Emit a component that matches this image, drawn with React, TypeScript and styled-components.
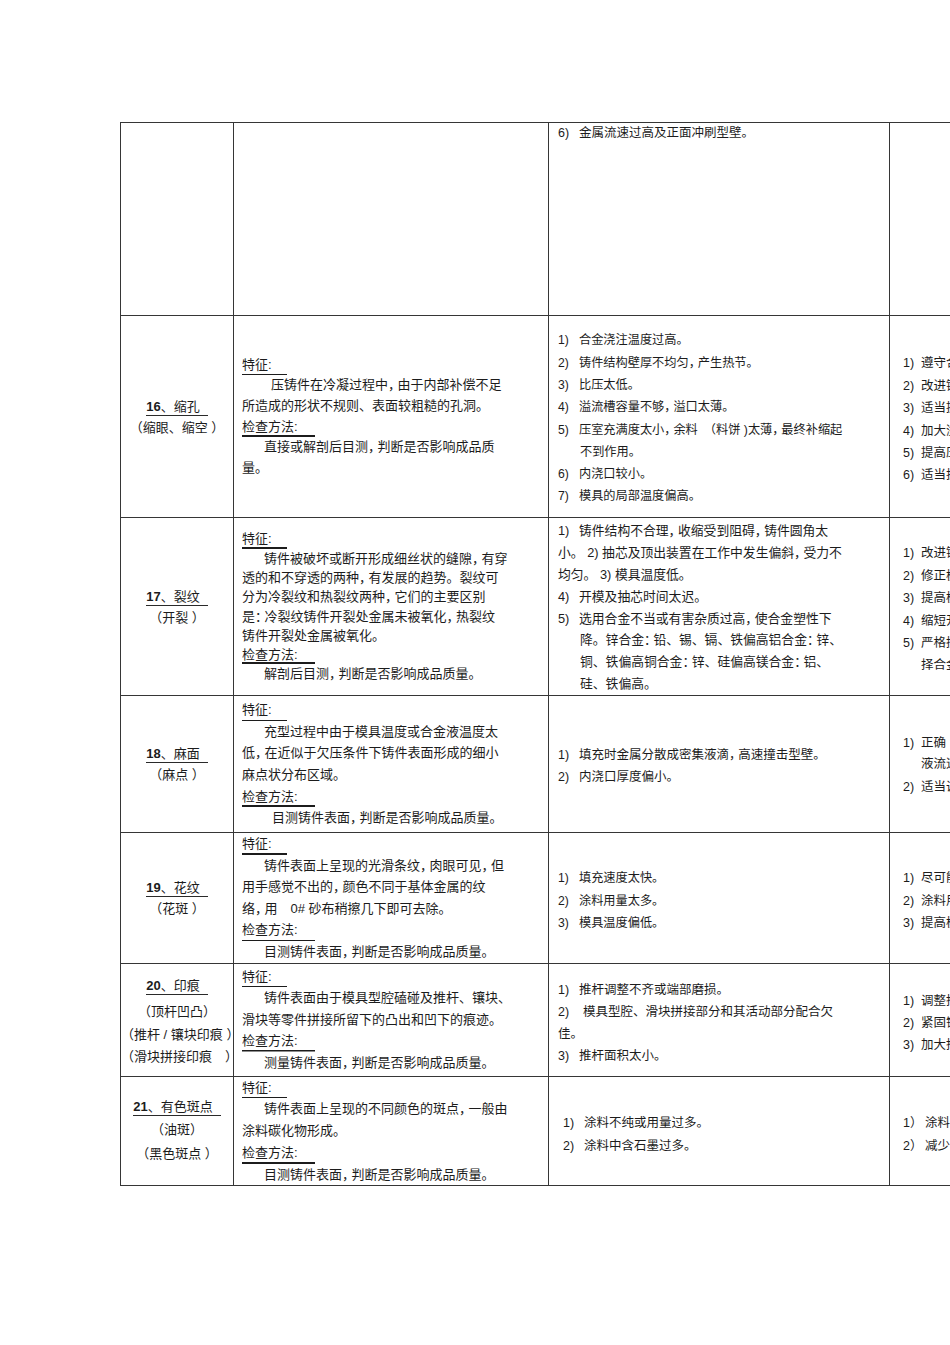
import React from 'react';
import styled, { createGlobalStyle } from 'styled-components';

type Seg = {
  n?: string;
  t: string;
  pad?: number;
  h?: number;
  nw?: number;
};

type TextBlock = {
  fs: number;
  lh: number;
  pl: number;
  pt: number;
  segs: Seg[];
};

type Desc = {
  lh: number;
  feature: string[];
  featIndent: number;
  featThick: number;
  check: string[];
  checkIndent: number;
  checkThick: number;
};

type Label = {
  num: string;
  name: string;
  subs: { t: string; h?: number }[];
  titleH?: number;
};

type RowData = {
  height: number;
  top?: boolean;
  label?: Label;
  desc?: Desc;
  causes: TextBlock;
  fixes: TextBlock;
};

const GlobalStyle = createGlobalStyle`
  html, body {
    margin: 0;
    padding: 0;
    background: #ffffff;
    overflow: hidden;
  }
  body {
    font-family: "Liberation Sans", "Noto Sans CJK SC", sans-serif;
    color: #1c1c1c;
  }
`;

const Page = styled.div`
  width: 950px;
  height: 1345px;
  box-sizing: border-box;
  padding: 122px 0 0 120px;
  overflow: hidden;
`;

const Table = styled.table`
  border-collapse: collapse;
  table-layout: fixed;
  width: 1110px;
`;

const Col = styled.col<{ $w: number }>`
  width: ${p => p.$w}px;
`;

const Row = styled.tr<{ $h: number }>`
  height: ${p => p.$h}px;
`;

const Cell = styled.td<{ $top?: boolean; $pl?: number; $pt?: number }>`
  border: 1px solid #363636;
  vertical-align: ${p => (p.$top ? 'top' : 'middle')};
  padding: ${p => p.$pt ?? 0}px 0 0 ${p => p.$pl ?? 0}px;
  white-space: nowrap;
  overflow: hidden;
`;

const LabelCell = styled(Cell)`
  text-align: center;
  font-size: 13px;
`;

const DescCell = styled(Cell)`
  font-size: 13px;
`;

const Block = styled.div<{ $fs: number; $lh: number }>`
  font-size: ${p => p.$fs}px;
  line-height: ${p => p.$lh}px;
`;

const TextLine = styled.div<{ $pad?: number; $h?: number }>`
  padding-left: ${p => p.$pad ?? 0}px;
  ${p => (p.$h ? `height: ${p.$h}px; line-height: ${p.$h}px;` : '')}
`;

const Item = styled(TextLine)`
  display: flex;
`;

const Num = styled.span<{ $w: number }>`
  flex: none;
  width: ${p => p.$w}px;
`;

const Punct = styled.span`
  font-feature-settings: "halt";
  margin-right: 3px;
`;

const Heading = styled.div<{ $w: number; $t: number }>`
  width: ${p => p.$w}px;
  background: linear-gradient(#1c1c1c, #1c1c1c) left bottom / 100% ${p => p.$t}px no-repeat;
`;

const Title = styled.span`
  display: inline-block;
  line-height: 17px;
  padding-right: 8px;
  border-bottom: 1px solid #2a2a2a;
`;

const Bold = styled.b`
  font-weight: 700;
`;

const rich = (t: string) =>
  t.split(/([，：])/).map((s, i) =>
    s === '，' || s === '：' ? <Punct key={i}>{s}</Punct> : <React.Fragment key={i}>{s}</React.Fragment>
  );

const rows: RowData[] = [
  {
    height: 193,
    top: true,
    causes: {
      fs: 12.5,
      lh: 20,
      pl: 9,
      pt: 0,
      segs: [{ n: '6)', t: '金属流速过高及正面冲刷型壁。' }],
    },
    fixes: { fs: 12.5, lh: 22, pl: 13, pt: 0, segs: [] },
  },
  {
    height: 202,
    label: { num: '16', name: '缩孔', subs: [{ t: '（缩眼、缩空 ）' }] },
    desc: {
      lh: 20.6,
      feature: ['压铸件在冷凝过程中，由于内部补偿不足', '所造成的形状不规则、表面较粗糙的孔洞。'],
      featIndent: 29,
      featThick: 1,
      check: ['直接或解剖后目测，判断是否影响成品质', '量。'],
      checkIndent: 22,
      checkThick: 2,
    },
    causes: {
      fs: 12.2,
      lh: 22.3,
      pl: 9,
      pt: 4,
      segs: [
        { n: '1)', t: '合金浇注温度过高。' },
        { n: '2)', t: '铸件结构壁厚不均匀，产生热节。' },
        { n: '3)', t: '比压太低。' },
        { n: '4)', t: '溢流槽容量不够，溢口太薄。' },
        { n: '5)', t: '压室充满度太小，余料　（料饼 )太薄，最终补缩起' },
        { t: '不到作用。', pad: 22 },
        { n: '6)', t: '内浇口较小。' },
        { n: '7)', t: '模具的局部温度偏高。' },
      ],
    },
    fixes: {
      fs: 12.5,
      lh: 22.4,
      pl: 13,
      pt: 6,
      segs: [
        { n: '1)', t: '遵守合理的压铸工艺规范。' },
        { n: '2)', t: '改进铸件结构，使壁厚均匀。' },
        { n: '3)', t: '适当提高比压。' },
        { n: '4)', t: '加大溢流槽容量，增厚溢口。' },
        { n: '5)', t: '提高压室充满度。' },
        { n: '6)', t: '适当扩大内浇口。' },
      ],
    },
  },
  {
    height: 178,
    label: { num: '17', name: '裂纹', subs: [{ t: '（开裂 ）' }] },
    desc: {
      lh: 19.3,
      feature: [
        '铸件被破坏或断开形成细丝状的缝隙，有穿',
        '透的和不穿透的两种，有发展的趋势。裂纹可',
        '分为冷裂纹和热裂纹两种，它们的主要区别',
        '是：冷裂纹铸件开裂处金属未被氧化，热裂纹',
        '铸件开裂处金属被氧化。',
      ],
      featIndent: 22,
      featThick: 2,
      check: ['解剖后目测，判断是否影响成品质量。'],
      checkIndent: 22,
      checkThick: 2,
    },
    causes: {
      fs: 12.8,
      lh: 21.8,
      pl: 9,
      pt: 2,
      segs: [
        { n: '1)', t: '铸件结构不合理，收缩受到阻碍，铸件圆角太' },
        { t: '小。 2)  抽芯及顶出装置在工作中发生偏斜，受力不' },
        { t: '均匀。 3)  模具温度低。' },
        { n: '4)', t: '开模及抽芯时间太迟。' },
        { n: '5)', t: '选用合金不当或有害杂质过高，使合金塑性下' },
        { t: '降。锌合金：铅、锡、镉、铁偏高铝合金：锌、', pad: 22 },
        { t: '铜、铁偏高铜合金：锌、硅偏高镁合金：铝、', pad: 22 },
        { t: '硅、铁偏高。', pad: 22 },
      ],
    },
    fixes: {
      fs: 12.5,
      lh: 22.4,
      pl: 13,
      pt: 6,
      segs: [
        { n: '1)', t: '改进铸件结构，加大圆角。' },
        { n: '2)', t: '修正模具。' },
        { n: '3)', t: '提高模具温度。' },
        { n: '4)', t: '缩短开模及抽芯时间。' },
        { n: '5)', t: '严格控制金属中的有害杂质，选' },
        { t: '择合金。', pad: 18 },
      ],
    },
  },
  {
    height: 137,
    label: { num: '18', name: '麻面', subs: [{ t: '（麻点 ）' }] },
    desc: {
      lh: 21.6,
      feature: [
        '充型过程中由于模具温度或合金液温度太',
        '低，在近似于欠压条件下铸件表面形成的细小',
        '麻点状分布区域。',
      ],
      featIndent: 22,
      featThick: 1,
      check: ['目测铸件表面，判断是否影响成品质量。'],
      checkIndent: 30,
      checkThick: 2,
    },
    causes: {
      fs: 12.5,
      lh: 22,
      pl: 9,
      pt: 3,
      segs: [
        { n: '1)', t: '填充时金属分散成密集液滴，高速撞击型壁。' },
        { n: '2)', t: '内浇口厚度偏小。' },
      ],
    },
    fixes: {
      fs: 12.5,
      lh: 22,
      pl: 13,
      pt: 4,
      segs: [
        { n: '1)', t: '正确　选择合金液温度，控制', h: 20 },
        { t: '液流速度。', pad: 18, h: 23 },
        { n: '2)', t: '适当调整内浇口厚度。', h: 23 },
      ],
    },
  },
  {
    height: 130,
    label: { num: '19', name: '花纹', subs: [{ t: '（花斑 ）' }] },
    desc: {
      lh: 21.6,
      feature: [
        '铸件表面上呈现的光滑条纹，肉眼可见，但',
        '用手感觉不出的，颜色不同于基体金属的纹',
        '络，用　0# 砂布稍擦几下即可去除。',
      ],
      featIndent: 22,
      featThick: 2,
      check: ['目测铸件表面，判断是否影响成品质量。'],
      checkIndent: 22,
      checkThick: 1,
    },
    causes: {
      fs: 12.2,
      lh: 22.5,
      pl: 9,
      pt: 6,
      segs: [
        { n: '1)', t: '填充速度太快。' },
        { n: '2)', t: '涂料用量太多。' },
        { n: '3)', t: '模具温度偏低。' },
      ],
    },
    fixes: {
      fs: 12.5,
      lh: 22.5,
      pl: 13,
      pt: 6,
      segs: [
        { n: '1)', t: '尽可能降低填充速度。' },
        { n: '2)', t: '涂料用量薄而均匀。' },
        { n: '3)', t: '提高模具温度。' },
      ],
    },
  },
  {
    height: 113,
    label: {
      num: '20',
      name: '印痕',
      titleH: 28,
      subs: [{ t: '（顶杆凹凸）', h: 24 }, { t: '（推杆 / 镶块印痕 ）', h: 22 }, { t: '（滑块拼接印痕　）', h: 22 }],
    },
    desc: {
      lh: 21.5,
      feature: ['铸件表面由于模具型腔磕碰及推杆、镶块、', '滑块等零件拼接所留下的凸出和凹下的痕迹。'],
      featIndent: 22,
      featThick: 1,
      check: ['测量铸件表面，判断是否影响成品质量。'],
      checkIndent: 22,
      checkThick: 1.5,
    },
    causes: {
      fs: 12.5,
      lh: 22,
      pl: 9,
      pt: 6,
      segs: [
        { n: '1)', t: '推杆调整不齐或端部磨损。' },
        { n: '2)', t: '模具型腔、滑块拼接部分和其活动部分配合欠', nw: 25 },
        { t: '佳。' },
        { n: '3)', t: '推杆面积太小。' },
      ],
    },
    fixes: {
      fs: 12.5,
      lh: 22,
      pl: 13,
      pt: 7,
      segs: [
        { n: '1)', t: '调整推杆长度。' },
        { n: '2)', t: '紧固镶块。' },
        { n: '3)', t: '加大推杆面积。' },
      ],
    },
  },
  {
    height: 109,
    label: {
      num: '21',
      name: '有色斑点',
      titleH: 20,
      subs: [{ t: '（油斑）', h: 26 }, { t: '（黑色斑点 ）', h: 22 }],
    },
    desc: {
      lh: 21.75,
      feature: ['铸件表面上呈现的不同颜色的斑点，一般由', '涂料碳化物形成。'],
      featIndent: 22,
      featThick: 1,
      check: ['目测铸件表面，判断是否影响成品质量。'],
      checkIndent: 22,
      checkThick: 2,
    },
    causes: {
      fs: 12.5,
      lh: 23,
      pl: 14,
      pt: 8,
      segs: [
        { n: '1)', t: '涂料不纯或用量过多。' },
        { n: '2)', t: '涂料中含石墨过多。' },
      ],
    },
    fixes: {
      fs: 12.5,
      lh: 23,
      pl: 13,
      pt: 8,
      segs: [
        { n: '1）', t: '涂料用量薄而均匀。', nw: 22 },
        { n: '2）', t: '减少涂料中石墨含量。', nw: 22 },
      ],
    },
  },
];

const Segs = ({ block, numW }: { block: TextBlock; numW: number }) => (
  <Block $fs={block.fs} $lh={block.lh}>
    {block.segs.map((s, i) =>
      s.n ? (
        <Item key={i} $h={s.h}>
          <Num $w={s.nw ?? numW}>{s.n}</Num>
          <span>{rich(s.t)}</span>
        </Item>
      ) : (
        <TextLine key={i} $pad={s.pad} $h={s.h}>
          {rich(s.t)}
        </TextLine>
      )
    )}
  </Block>
);

const DescBlock = ({ desc }: { desc: Desc }) => (
  <Block $fs={13} $lh={desc.lh}>
    <Heading $w={45} $t={desc.featThick}>特征:</Heading>
    {desc.feature.map((t, i) => (
      <TextLine key={i} $pad={i === 0 ? desc.featIndent : 0}>
        {rich(t)}
      </TextLine>
    ))}
    <Heading $w={73} $t={desc.checkThick}>检查方法:</Heading>
    {desc.check.map((t, i) => (
      <TextLine key={i} $pad={i === 0 ? desc.checkIndent : 0}>
        {rich(t)}
      </TextLine>
    ))}
  </Block>
);

const LabelBlock = ({ label }: { label: Label }) => (
  <Block $fs={13} $lh={21}>
    <TextLine $h={label.titleH}>
      <Title>
        <Bold>{label.num}</Bold>、{label.name}
      </Title>
    </TextLine>
    {label.subs.map((s, i) => (
      <TextLine key={i} $h={s.h}>
        {s.t}
      </TextLine>
    ))}
  </Block>
);

const App = () => {
  return (
    <>
      <GlobalStyle />
      <Page>
        <Table>
          <colgroup>
            <Col $w={113} />
            <Col $w={315} />
            <Col $w={341} />
            <Col $w={341} />
          </colgroup>
          <tbody>
            {rows.map((r, i) => (
              <Row key={i} $h={r.height}>
                <LabelCell>{r.label && <LabelBlock label={r.label} />}</LabelCell>
                <DescCell $pl={8}>{r.desc && <DescBlock desc={r.desc} />}</DescCell>
                <Cell $top={r.top} $pl={r.causes.pl} $pt={r.causes.pt}>
                  <Segs block={r.causes} numW={21} />
                </Cell>
                <Cell $top={r.top} $pl={r.fixes.pl} $pt={r.fixes.pt}>
                  <Segs block={r.fixes} numW={18} />
                </Cell>
              </Row>
            ))}
          </tbody>
        </Table>
      </Page>
    </>
  );
};

export default App;
